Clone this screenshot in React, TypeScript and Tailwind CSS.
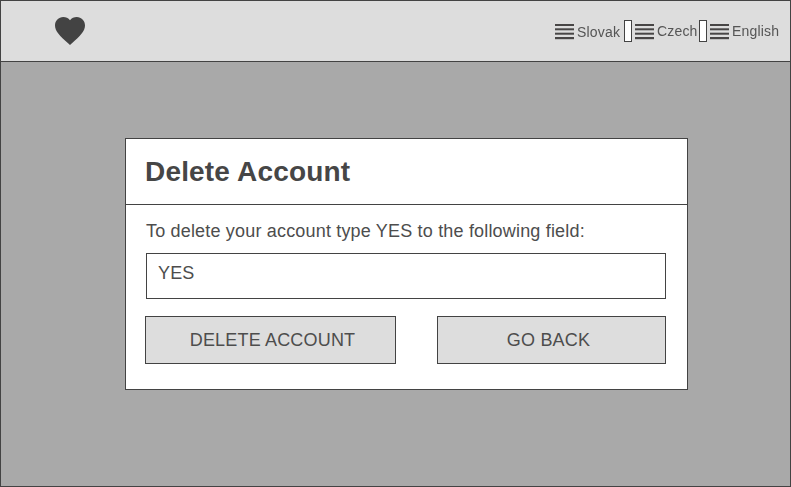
const Lines = () => (
  <svg width="19" height="16" viewBox="0 0 19 16" className="mt-0.5 shrink-0" fill="#484646">
    <rect y="0" width="19" height="2" />
    <rect y="4.3" width="19" height="2" />
    <rect y="8.7" width="19" height="2" />
    <rect y="13" width="19" height="2.2" />
  </svg>
);

const Separator = () => <div className="h-[22px] w-2 shrink-0 border border-[#434343] bg-white" />;

export default function App() {
  return (
    <div className="flex h-[487px] w-[791px] flex-col overflow-hidden border border-[#434343] bg-[#a9a9a9] font-['Liberation_Sans',Arial,sans-serif] text-[#434343] antialiased">
      <header className="flex h-[61px] shrink-0 items-center border-b border-[#434343] bg-[#dddddd] pl-[54px]">
        <svg width="30" height="28" viewBox="2 3 20 18.35" preserveAspectRatio="none" fill="#434343">
          <path d="M12 21.35l-1.45-1.32C5.4 15.36 2 12.28 2 8.5 2 5.42 4.42 3 7.5 3c1.74 0 3.41.81 4.5 2.09C13.09 3.81 14.76 3 16.5 3 19.58 3 22 5.42 22 8.5c0 3.78-3.4 6.86-8.55 11.54L12 21.35z" />
        </svg>
        <nav className="ml-[470px] flex items-center text-[14px] leading-4 tracking-[0.18px] text-[#555555] will-change-transform">
          <Lines />
          <span className="ml-[3px] w-[47px] pt-0.5">Slovak</span>
          <Separator />
          <span className="w-[3px]" />
          <Lines />
          <span className="ml-[3px] w-[42px]">Czech</span>
          <Separator />
          <span className="w-[3px]" />
          <Lines />
          <span className="ml-[3px]">English</span>
        </nav>
      </header>
      <main className="ml-[124px] mt-[76px] h-[252px] w-[563px] shrink-0 border border-[#434343] bg-white">
        <h1 className="flex h-[66px] items-center border-b border-[#434343] pl-[19px] text-[28px] font-bold tracking-[0.18px] text-[#464646]">Delete Account</h1>
        <div className="pl-[19px] pr-[21px] pt-4 text-[18px] leading-[21px] tracking-[0.18px] text-[#4d4d4d]">
          <p className="ml-px whitespace-nowrap">To delete your account type YES to the following field:</p>
          <input defaultValue="YES" className="ml-px mt-[11px] block h-[46px] w-[520px] border border-[#434343] bg-white pb-[5px] pl-[11px] outline-none" />
          <div className="mt-[17px] flex justify-between">
            <button className="h-12 w-[251px] border border-[#434343] bg-[#dddddd] pl-1">DELETE ACCOUNT</button>
            <button className="h-12 w-[229px] border border-[#434343] bg-[#dddddd] pr-1.5">GO BACK</button>
          </div>
        </div>
      </main>
    </div>
  );
}
